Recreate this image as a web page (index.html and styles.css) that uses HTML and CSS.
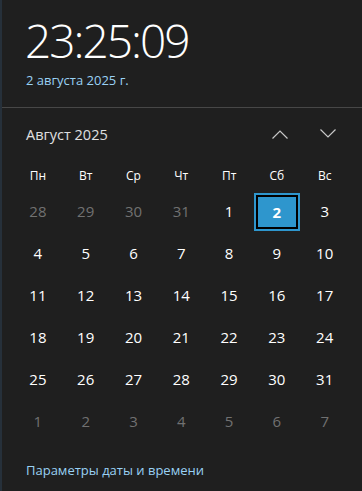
FILE: index.html
```html
<!DOCTYPE html>
<html lang="ru">
<head>
  <meta charset="UTF-8">
  <meta name="viewport" content="width=device-width, initial-scale=1.0">
  <title>Дата и время</title>
  <link rel="stylesheet" href="styles.css">
</head>
<body>
  <div class="flyout">
    <div class="clock">
      <div class="time">23:25:09</div>
      <div class="date">2 августа 2025 г.</div>
    </div>

    <div class="calendar">
      <div class="month-bar">
        <span class="month">Август 2025</span>
        <div class="arrows">
          <svg width="16" height="10" viewBox="0 0 16 10"><path d="M0.5 9.5 L8 2 L15.5 9.5" fill="none" stroke="#c8c8c8" stroke-width="1.2"/></svg>
          <svg width="16" height="10" viewBox="0 0 16 10"><path d="M0.5 0.5 L8 8 L15.5 0.5" fill="none" stroke="#c8c8c8" stroke-width="1.2"/></svg>
        </div>
      </div>

      <div class="weekdays">
        <span>Пн</span><span>Вт</span><span>Ср</span><span>Чт</span><span>Пт</span><span>Сб</span><span>Вс</span>
      </div>

      <div class="days">
        <span class="other">28</span><span class="other">29</span><span class="other">30</span><span class="other">31</span><span>1</span><span class="today">2</span><span>3</span>
        <span>4</span><span>5</span><span>6</span><span>7</span><span>8</span><span>9</span><span>10</span>
        <span>11</span><span>12</span><span>13</span><span>14</span><span>15</span><span>16</span><span>17</span>
        <span>18</span><span>19</span><span>20</span><span>21</span><span>22</span><span>23</span><span>24</span>
        <span>25</span><span>26</span><span>27</span><span>28</span><span>29</span><span>30</span><span>31</span>
        <span class="other">1</span><span class="other">2</span><span class="other">3</span><span class="other">4</span><span class="other">5</span><span class="other">6</span><span class="other">7</span>
      </div>
    </div>

    <div class="footer">
      <a href="#">Параметры даты и времени</a>
    </div>
  </div>
</body>
</html>
```

FILE: styles.css
```css
* {
  box-sizing: border-box;
  margin: 0;
  padding: 0;
}

body {
  background: #1f1f1f;
  font-family: "Open Sans", "Noto Sans", Arial, sans-serif;
  color: #fff;
}

.flyout {
  width: 362px;
  height: 491px;
  border-left: 2px solid #26303a;
  overflow: hidden;
}

/* Часы */
.clock {
  height: 108px;
  padding: 14px 0 0 23px;
  border-bottom: 1px solid #474747;
}

.time {
  font-size: 46px;
  font-weight: 300;
  line-height: 52px;
  letter-spacing: -2px;
}

.date {
  font-size: 13px;
  color: #99d1f4;
  margin: 5px 0 0 1px;
}

/* Календарь */
.month-bar {
  height: 52px;
  display: flex;
  align-items: center;
  justify-content: space-between;
  padding: 0 26px 0 24px;
}

.month {
  font-size: 14.5px;
  color: #e0e0e0;
}

.arrows {
  display: flex;
  gap: 32px;
}

.weekdays,
.days {
  display: grid;
  grid-template-columns: repeat(7, 47.8px);
  padding-left: 12px;
}

.weekdays span {
  height: 30px;
  display: flex;
  align-items: center;
  justify-content: center;
  font-size: 12px;
  font-weight: 500;
}

.days span {
  height: 42px;
  display: flex;
  align-items: center;
  justify-content: center;
  font-size: 15px;
}

.days .other {
  color: #717171;
}

.days .today {
  margin: 3px 1px 1px;
  height: 38px;
  background: #2e96cd;
  border: 2px solid #2e96cd;
  box-shadow: inset 0 0 0 2px #000;
  font-weight: 700;
}

/* Ссылка */
.footer {
  padding: 16px 0 0 24px;
}

.footer a {
  font-size: 13px;
  color: #99d1f4;
  text-decoration: none;
}
```
